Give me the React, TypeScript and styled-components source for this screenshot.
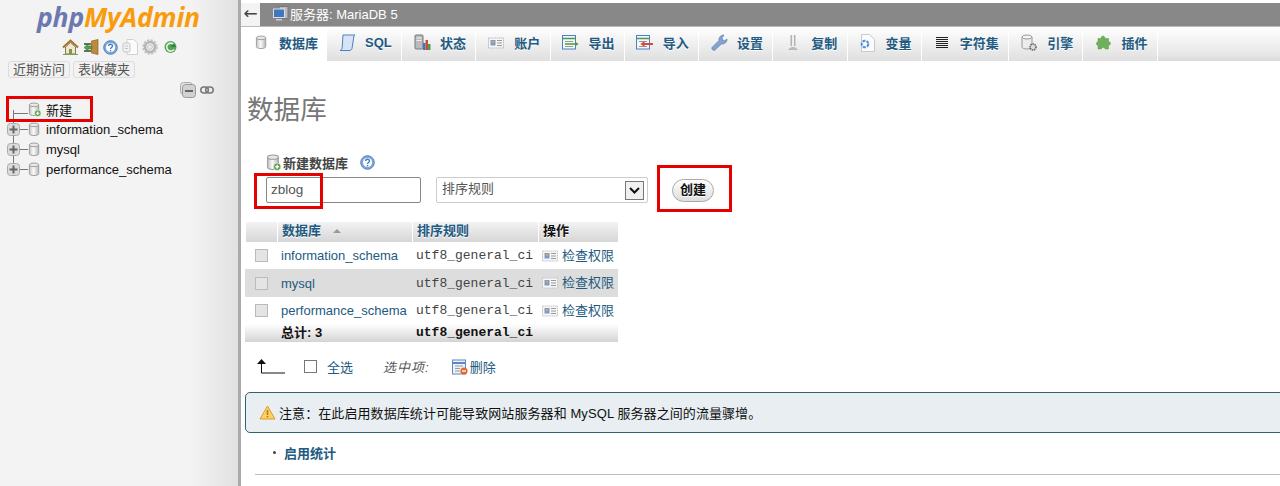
import styled, { createGlobalStyle } from "styled-components";

const GlobalStyle = createGlobalStyle`
  html, body {
    margin: 0;
    padding: 0;
    height: 100%;
    overflow: hidden;
    background: #fff;
  }
  body {
    font-family: "Liberation Sans", "Noto Sans CJK SC", sans-serif;
    font-size: 13px;
    color: #444;
  }
`;

/* ---------- icons ---------- */

const Db = ({ add = false, size = 14 }: { add?: boolean; size?: number }) => (
  <svg width={size} height={size + 2} viewBox="0 0 14 16">
    <defs>
      <linearGradient id="dbg" x1="0" x2="1" y1="0" y2="0">
        <stop offset="0" stopColor="#c4c4c4" />
        <stop offset="0.45" stopColor="#fafafa" />
        <stop offset="1" stopColor="#b8b8b8" />
      </linearGradient>
    </defs>
    <path d="M1.5 3v9.5c0 1.2 2.4 2 5 2s5-.8 5-2V3z" fill="url(#dbg)" stroke="#999" />
    <ellipse cx="6.5" cy="3" rx="5" ry="2" fill="#e8e8e8" stroke="#999" />
    {add && (
      <>
        <circle cx="10.5" cy="12" r="3.5" fill="#5a9e4b" stroke="#fff" strokeWidth="0.6" />
        <path d="M8.7 12h3.6M10.5 10.2v3.6" stroke="#fff" strokeWidth="1.2" />
      </>
    )}
  </svg>
);

const HomeIcon = () => (
  <svg width="17" height="16" viewBox="0 0 17 16">
    <path d="M1 8.5 8.5 1.5 16 8.5" fill="none" stroke="#a5742c" strokeWidth="2" />
    <path d="M3.5 8 8.5 3.5 13.5 8v7h-10z" fill="#efe6cf" stroke="#8b7a50" />
    <path d="M7 10h3v5H7z" fill="#7a9a4a" />
    <path d="M1 15.5h15" stroke="#7da04f" strokeWidth="1" />
  </svg>
);

const ExitIcon = () => (
  <svg width="16" height="16" viewBox="0 0 16 16">
    <path d="M8.5 2 15 .5v15l-6.5-1.5z" fill="#c08a3c" stroke="#8d6426" strokeWidth="0.7" />
    <path d="M1 4h7v2H1zM1 11h7v2H1z" fill="#6b6f5c" />
    <path d="M1 8.5 5 5v2h4v3H5v2z" fill="#54a050" stroke="#2f7232" strokeWidth="0.5" />
  </svg>
);

const HelpIcon = () => (
  <svg width="15" height="15" viewBox="0 0 15 15">
    <circle cx="7.5" cy="7.5" r="6.8" fill="#7ba6dc" stroke="#5a84bb" />
    <circle cx="7.5" cy="7.5" r="4.6" fill="#fff" />
    <path d="M5.6 6c.2-2.4 3.9-2.2 3.9 0 0 1.5-2 1.4-2 3" fill="none" stroke="#3e78bd" strokeWidth="1.4" />
    <path d="M6.8 10h1.4v1.4H6.8z" fill="#3e78bd" />
  </svg>
);

const DocIcon = () => (
  <svg width="16" height="16" viewBox="0 0 16 16">
    <path d="M5 .5h6.5L15.5 4v11.5H5z" fill="#fbfbfb" stroke="#d2d2d2" />
    <rect x="1" y="4" width="7" height="9" rx="1.5" fill="#f1f1f1" stroke="#c4c4c4" />
    <path d="M3 7h3M3 9.5h3" stroke="#c4c4c4" />
  </svg>
);

const GearIcon = () => (
  <svg width="16" height="16" viewBox="0 0 16 16">
    <circle cx="8" cy="8" r="5" fill="none" stroke="#b4b4b4" strokeWidth="2.6" />
    <circle cx="8" cy="8" r="6.8" fill="none" stroke="#c4c4c4" strokeWidth="2" strokeDasharray="2.2 1.4" />
    <circle cx="8" cy="8" r="2.4" fill="#ececec" stroke="#aaa" strokeWidth="0.6" />
  </svg>
);

const ReloadIcon = () => (
  <svg width="15" height="14" viewBox="-2 0 15 14">
    <circle cx="6.5" cy="7" r="6" fill="#55a35a" />
    <path d="M10 4.8A4 4 0 1 0 10 9.4" fill="none" stroke="#e4f2df" strokeWidth="1.6" />
    <path d="M6.8 6.8h5.4L9.5 3.6z" fill="#2e7f3a" />
  </svg>
);

const CollapseIcon = () => (
  <svg width="16" height="16" viewBox="0 0 16 16">
    <rect x="0.5" y="0.5" width="12" height="12" rx="3" fill="#e4e4e4" stroke="#aaa" />
    <rect x="2.5" y="2.5" width="13" height="13" rx="3" fill="#d2d2d2" stroke="#999" />
    <path d="M5 9h8" stroke="#666" strokeWidth="2" />
  </svg>
);

const LinkIcon = () => (
  <svg width="14" height="8" viewBox="0 0 14 8">
    <rect x="0.8" y="1" width="7.5" height="6" rx="3" fill="none" stroke="#777" strokeWidth="1.5" />
    <rect x="5.7" y="1" width="7.5" height="6" rx="3" fill="none" stroke="#777" strokeWidth="1.5" />
  </svg>
);

const PlusBox = () => (
  <svg width="13" height="13" viewBox="0 0 13 13">
    <rect x="0.5" y="0.5" width="12" height="12" rx="3" fill="#dcdcdc" stroke="#aaa" />
    <path d="M2.500 6.500h8M6.500 2.500v8" stroke="#666" strokeWidth="2" />
  </svg>
);

const ScrollIcon = () => (
  <svg width="17" height="17" viewBox="0 0 17 17">
    <path d="M4 1h12c-1.500 1-1.500 3-1.500 4l-1.500 9.500c-.3 1.500-1.500 2-3 2H1c1.500-.5 2-1.500 2.200-3z" fill="#d7e4f6" stroke="#4c80c4" />
  </svg>
);

const StatusIcon = () => (
  <svg width="17" height="17" viewBox="0 0 17 17">
    <rect x="1" y="1" width="8" height="14" rx="1" fill="#bbb" stroke="#777" />
    <path d="M2.500 4h5M2.500 6.500h5" stroke="#eee" />
    <path d="M9 9h2.500v7H9z" fill="#3a76c4" />
    <path d="M11.500 6H14v10h-2.500z" fill="#d04a3a" />
    <path d="M14 10h2.500v6H14z" fill="#4aa04a" />
  </svg>
);

const CardIcon = ({ dim = false }: { dim?: boolean }) => (
  <svg width="16" height="12" viewBox="0 0 16 12">
    <rect x="0.5" y="1" width="15" height="10" fill="#f6f6f6" stroke={dim ? "#c6c6c6" : "#bbb"} strokeDasharray="1.500 0.600" />
    <rect x="2.500" y="3" width="5" height="5.500" fill="#6f9ed6" />
    <rect x="3.800" y="3.800" width="2.400" height="2.400" fill="#e6a04a" />
    <path d="M9 3.500h5M9 6h5M9 8.500h5" stroke="#9a9a9a" />
  </svg>
);

const ExportIcon = () => (
  <svg width="17" height="15" viewBox="0 0 17 15">
    <rect x="0.5" y="0.5" width="13" height="13.500" fill="#f3f6fb" stroke="#4c80c4" />
    <path d="M0.500 3.500h13" stroke="#4c9a4c" strokeWidth="1.500" />
    <path d="M3 6.500h8M3 11.500h8" stroke="#999" />
    <path d="M3 9h10" stroke="#4a9a3e" strokeWidth="1.500" />
    <path d="M13 6.500 16.500 9 13 11.500z" fill="#4a9a3e" />
  </svg>
);

const ImportIcon = () => (
  <svg width="17" height="15" viewBox="0 0 17 15">
    <rect x="0.500" y="0.500" width="13" height="13.500" fill="#f3f6fb" stroke="#4c80c4" />
    <path d="M0.500 3.500h13" stroke="#4c9a4c" strokeWidth="1.500" />
    <path d="M3 6.500h8M3 11.500h8" stroke="#999" />
    <path d="M7 9h10" stroke="#e0453a" strokeWidth="2" />
    <path d="M8.500 6 4.500 9l4 3z" fill="#e0453a" />
  </svg>
);

const WrenchIcon = () => (
  <svg width="17" height="17" viewBox="0 0 17 17">
    <path d="M2 16c-1-.5-1.500-1.500-1-2.500l7-7C7.500 4 9.500.8 13 1l-2 3 .7 2 2 .7L16 5c.3 3.500-3 5.500-5.500 5L4 16c-.6.500-1.300.500-2 0z" fill="#7fa4d8" stroke="#6b7f99" strokeWidth="0.700" />
  </svg>
);

const ReplicationIcon = () => (
  <svg width="12" height="18" viewBox="0 0 12 18">
    <path d="M3.500 1h1.500v11H3.500zM7 1h1.500v11H7z" fill="#b4b4b4" />
    <path d="M5 1h2v11H5z" fill="#eee" />
    <path d="M1 16c1-1.500 2.500-3 5-3s4 1.500 5 3z" fill="#b9b9b9" />
  </svg>
);

const VariableIcon = () => (
  <svg width="15" height="18" viewBox="0 0 15 18">
    <path d="M1.500.5h8l5 5v12h-13z" fill="#fbfbfb" stroke="#c9c9c9" />
    <circle cx="5" cy="10" r="3.300" fill="none" stroke="#4f8fe0" strokeWidth="2" strokeDasharray="3 1.200" />
  </svg>
);

const CharsetIcon = () => (
  <svg width="12" height="12" viewBox="0 0 12 12">
    <path d="M0 .5h12M0 2.500h12M0 4.500h12M0 6.500h12M0 8.500h12M0 10.500h12" stroke="#222" />
  </svg>
);

const EngineIcon = () => (
  <svg width="17" height="18" viewBox="0 0 17 18">
    <path d="M1 3v10c0 1.200 2.400 2 5 2s5-.8 5-2V3z" fill="#ececec" stroke="#999" />
    <ellipse cx="6" cy="3" rx="5" ry="2" fill="#f5f5f5" stroke="#999" />
    <circle cx="12" cy="13" r="3" fill="#ddd" stroke="#666" strokeWidth="1.600" strokeDasharray="1.500 0.700" />
  </svg>
);

const PluginIcon = () => (
  <svg width="15" height="16" viewBox="0 0 15 16">
    <path d="M5 3.500c0-1 .5-2.500 2-2.500s2 1.500 2 2.500h3.500v3.300c1 0 2 .5 2 1.700s-1 1.700-2 1.700V14H9c0-1-.5-1.500-1.800-1.500S5.500 13 5.500 14H2v-3.500C1 10.500.5 9.500.5 8.500S1 6.800 2 6.800V3.500z" fill="#6fb05c" stroke="#5d9a4b" strokeWidth="0.500" />
  </svg>
);

const MonitorIcon = () => (
  <svg width="16" height="16" viewBox="0 0 16 16">
    <rect x="6" y="0.500" width="9" height="12" fill="#bbb" stroke="#777" />
    <rect x="0.500" y="3" width="11" height="8.500" fill="#3e78bd" stroke="#dde" />
    <path d="M3 13h6v1.500H3z" fill="#ccc" />
  </svg>
);

const DeleteRowIcon = () => (
  <svg width="16" height="18" viewBox="0 -2 16 18">
    <rect x="0.500" y="1" width="13" height="14" fill="#eef3fa" stroke="#5a8ac6" />
    <path d="M0.500 4h13" stroke="#5a8ac6" strokeWidth="2" />
    <path d="M3 7h8M3 9.500h5M3 12h5" stroke="#9a9a9a" />
    <circle cx="12" cy="12" r="3.600" fill="#e8662a" />
    <path d="M10 12h4" stroke="#fff" strokeWidth="1.400" />
  </svg>
);

const WarnIcon = () => (
  <svg width="17" height="15" viewBox="0 0 17 15">
    <path d="M8.500 1 16 14H1z" fill="#fbd266" stroke="#e19a2a" strokeLinejoin="round" />
    <path d="M8.500 5v5" stroke="#b87a1a" strokeWidth="1.600" />
    <path d="M7.700 11h1.600v1.400H7.700z" fill="#b87a1a" />
  </svg>
);

const ArrowUpIcon = () => (
  <svg width="28" height="15" viewBox="0 0 28 15">
    <path d="M4.500 3v11H28" fill="none" stroke="#111" />
    <path d="M0 5 4.500 0 9 5z" fill="#111" />
  </svg>
);

/* ---------- page shell ---------- */

const Page = styled.div`
  display: flex;
  width: 1280px;
  height: 486px;
  overflow: hidden;
  position: relative;
`;

const Sidebar = styled.aside`
  flex: none;
  box-sizing: border-box;
  width: 241px;
  height: 486px;
  padding-top: 4px;
  background: linear-gradient(to right, #f3f3f3 0, #f3f3f3 192px, #e2e2e2 236px);
  border-right: 3px solid #aaa;
`;

const Logo = styled.div`
  height: 27px;
  margin-left: 37px;
  font-family: "Open Sans", "Liberation Sans", sans-serif;
  font-size: 26.5px;
  line-height: 27px;
  font-weight: 700;
  font-style: italic;
  color: #f89c0e;
  letter-spacing: -0.2px;

  span {
    color: #6c78af;
  }
`;

const IconRow = styled.div`
  display: flex;
  align-items: center;
  margin: 8px 0 0 62px;
  gap: 4px;
  height: 16px;
`;

const RecentRow = styled.div`
  display: flex;
  gap: 3px;
  margin: 6px 0 0 8px;
`;

const SmallButton = styled.span`
  display: block;
  width: 62px;
  height: 17px;
  box-sizing: border-box;
  border: 1px solid #ddd;
  border-radius: 3px;
  background: #f2f2f2;
  font-size: 13px;
  line-height: 15px;
  text-align: center;
  color: #555;
`;

const TreeTools = styled.div`
  display: flex;
  align-items: center;
  gap: 4px;
  height: 16px;
  margin: 4px 0 0 180px;
`;

const Tree = styled.ul`
  list-style: none;
  margin: 1px 0 0;
  padding: 0;
`;

const TreeRow = styled.li<{ $trunk: "lower" | "full" | "upper" }>`
  position: relative;
  display: flex;
  align-items: center;
  height: 20px;
  padding-left: 7px;
  color: #111;
  font-size: 13px;

  &::before {
    content: "";
    position: absolute;
    left: 13px;
    width: 1px;
    background: #777;
    top: ${({ $trunk }) => ($trunk === "lower" ? "11px" : "0")};
    bottom: ${({ $trunk }) => ($trunk === "upper" ? "10px" : "0")};
  }
`;

const Expander = styled.span`
  position: relative;
  display: flex;
  flex: none;
`;

const Connector = styled.span<{ $long?: boolean }>`
  flex: none;
  margin: ${({ $long }) => ($long ? "8px 0 0 6px" : "0")};
  width: ${({ $long }) => ($long ? "15px" : "8px")};
  height: 1px;
  background: #777;
`;

const TreeLabel = styled.span`
  margin-left: 5px;
`;

const Main = styled.main`
  flex: 1;
  min-width: 0;
`;

const TopBar = styled.header`
  display: flex;
  align-items: center;
  box-sizing: border-box;
  height: 24px;
  margin-top: 3px;
  background: #888;
  border-bottom: 1px solid #bbb;
  color: #fff;
  font-size: 13px;
`;

const BackButton = styled.span`
  width: 19px;
  height: 23px;
  background: #f3f3f3;
  color: #444;
  font: 17px/20px "DejaVu Sans", sans-serif;
  text-align: center;
`;

const ServerName = styled.span`
  display: flex;
  align-items: center;
  gap: 1px;
  margin-left: 13px;
  padding-bottom: 2px;
`;

const Tabs = styled.nav`
  display: flex;
  height: 33px;
  background: linear-gradient(#fff, #e6e6e6 28px, #dcdcdc);
  border-bottom: 1px solid #ddd;
`;

const Tab = styled.a<{ $active?: boolean }>`
  display: flex;
  align-items: center;
  box-sizing: border-box;
  height: 34px;
  padding: 0 ${({ $active }) => ($active ? "8px" : "9.25px")} 3px 0;
  border-right: 1px solid #fff;
  background: ${({ $active }) => ($active ? "#fff" : "linear-gradient(#fff, #dfdfdf)")};
  color: #235a81;
  font-weight: 700;
  font-size: 13px;
  white-space: nowrap;
  text-shadow: 0 1px 0 #fff;
`;

const TabIcon = styled.span`
  display: flex;
  flex: none;
  justify-content: center;
  width: 18px;
  margin: 0 9px 0 11px;
`;

const Content = styled.div`
  padding-left: 4px;
`;

const Heading = styled.h2`
  margin: 34px 0 0 2px;
  height: 30px;
  font-size: 26.6px;
  line-height: 30px;
  font-weight: 400;
  color: #777;
`;

const CreateForm = styled.section`
  margin: 29px 0 0 21px;
`;

const CreateTitle = styled.div`
  display: flex;
  align-items: center;
  height: 17px;
  font-weight: 700;
  color: #444;

  svg:first-child {
    margin-right: 2px;
  }
`;

const CreateHelp = styled.span`
  display: flex;
  margin-left: 12px;
`;

const CreateFields = styled.div`
  display: flex;
  align-items: center;
  margin-top: 6px;
`;

const NameInput = styled.div`
  box-sizing: border-box;
  width: 155px;
  height: 26px;
  padding-left: 4px;
  border: 1px solid #888;
  border-radius: 2px;
  font-size: 13.500px;
  line-height: 24px;
  color: #555;
`;

const CollationSelect = styled.div`
  display: flex;
  align-items: center;
  justify-content: space-between;
  box-sizing: border-box;
  width: 212px;
  height: 26px;
  margin-left: 15px;
  padding: 0 3px 0 5px;
  border: 1px solid #ccc;
  border-radius: 2px;
  line-height: 22px;
  color: #555;
`;

const SelectText = styled.span`
  padding-bottom: 2px;
`;

const SelectArrow = styled.span`
  display: flex;
  align-items: center;
  justify-content: center;
  box-sizing: border-box;
  width: 19px;
  height: 19px;
  border: 1px solid #777;
  background: #f0f0f0;
`;

const CreateButton = styled.span`
  box-sizing: border-box;
  width: 42px;
  height: 23px;
  margin-left: 24px;
  border: 1px solid #aaa;
  border-radius: 12px;
  background: linear-gradient(#fff, #ddd);
  font-weight: 700;
  line-height: 19px;
  text-align: center;
  color: #111;
  text-shadow: 0 1px 0 #fff;
`;

const DbTable = styled.div`
  display: grid;
  grid-template-columns: 32px 135px 126px 80px;
  width: 373px;
  margin-top: 19px;
`;

const HeadCell = styled.div<{ $dark?: boolean }>`
  height: 20px;
  padding-left: 4px;
  box-sizing: border-box;
  border-left: 1px solid #fff;
  background: linear-gradient(#f3f3f3, #d6d6d6);
  color: ${({ $dark }) => ($dark ? "#111" : "#235a81")};
  font-weight: 700;
  line-height: 18px;
  text-shadow: 0 1px 0 #fff;
`;

const SortMark = styled.span`
  display: inline-block;
  width: 0;
  height: 0;
  margin: 0 0 2px 12px;
  border: 4px solid transparent;
  border-top: 0;
  border-bottom: 4px solid #999;
`;

const Row = styled.div<{ $height: number; $shaded?: boolean }>`
  display: contents;

  & > * {
    height: ${({ $height }) => $height}px;
    background: ${({ $shaded }) => ($shaded ? "#ddd" : "#fff")};
  }
`;

const Cell = styled.div`
  display: flex;
  align-items: center;
  padding-left: 4px;
  box-sizing: border-box;
  white-space: nowrap;
  color: #235a81;
  font-size: 13px;
`;

const CheckCell = styled(Cell)`
  padding-left: 10px;
`;

const CheckBox = styled.span<{ $plain?: boolean }>`
  display: block;
  box-sizing: border-box;
  flex: none;
  width: 13px;
  height: 13px;
  border: 1px solid ${({ $plain }) => ($plain ? "#777" : "#bbb")};
  background: ${({ $plain }) => ($plain ? "#fff" : "#e4e4e4")};
`;

const MonoCell = styled(Cell)`
  font-family: "Liberation Mono", monospace;
  color: #444;
`;

const ActionCell = styled(Cell)`
  gap: 4px;
  padding-left: 4px;
  color: #235a81;
`;

const ActionText = styled.span`
  margin-bottom: 3px;
`;

const FootCell = styled.div`
  box-sizing: border-box;
  padding-left: 4px;
  background: linear-gradient(#fff, #d4d4d4) !important;
  color: #111;
  font-weight: 700;
  line-height: 17px;
`;

const FootMono = styled(FootCell)`
  font-family: "Liberation Mono", monospace;
`;

const BulkBar = styled.div`
  display: flex;
  align-items: center;
  height: 16px;
  margin: 16px 0 0 12px;
`;

const BulkCheck = styled.span`
  margin-left: 19px;
`;

const BulkAll = styled.span`
  margin-left: 10px;
  color: #235a81;
`;

const BulkLabel = styled.em`
  margin-left: 30px;
  color: #555;
  letter-spacing: 1px;
`;

const BulkDelete = styled.span`
  display: flex;
  align-items: center;
  gap: 2px;
  margin-left: 22px;
  color: #235a81;
`;

const Notice = styled.div`
  display: flex;
  align-items: center;
  box-sizing: border-box;
  width: 1060px;
  height: 41px;
  margin-top: 18px;
  padding-left: 13px;
  border: 1px solid #316173;
  border-radius: 5px;
  background: #e8eef1;
  color: #111;
  gap: 3px;
  letter-spacing: 0.08px;
`;

const Doc = styled.ul`
  list-style: none;
  margin: 0 0 0 10px;
  padding: 0;
  border-bottom: 1px solid #bbb;
`;

const DocItem = styled.li`
  display: flex;
  align-items: center;
  box-sizing: border-box;
  height: 41px;
  padding: 0 0 3px 18px;
  color: #235a81;
  font-weight: 700;
  gap: 8px;

  &::before {
    content: "";
    width: 3px;
    height: 3px;
    border-radius: 50%;
    background: #444;
  }
`;

/* the red marks someone drew on top of the screenshot */
const RedMark = styled.div<{ $x: number; $y: number; $w: number; $h: number }>`
  position: absolute;
  left: ${({ $x }) => $x}px;
  top: ${({ $y }) => $y}px;
  width: ${({ $w }) => $w}px;
  height: ${({ $h }) => $h}px;
  box-sizing: border-box;
  border: 3px solid #e60000;
`;

const tabs = [
  { label: "数据库", icon: <Db size={13} />, active: true },
  { label: "SQL", icon: <ScrollIcon /> },
  { label: "状态", icon: <StatusIcon /> },
  { label: "账户", icon: <CardIcon /> },
  { label: "导出", icon: <ExportIcon /> },
  { label: "导入", icon: <ImportIcon /> },
  { label: "设置", icon: <WrenchIcon /> },
  { label: "复制", icon: <ReplicationIcon /> },
  { label: "变量", icon: <VariableIcon /> },
  { label: "字符集", icon: <CharsetIcon /> },
  { label: "引擎", icon: <EngineIcon /> },
  { label: "插件", icon: <PluginIcon /> },
];

const databases = ["information_schema", "mysql", "performance_schema"];

export default function App() {
  return (
    <Page>
      <GlobalStyle />
      <Sidebar>
        <Logo>
          <span>php</span>MyAdmin
        </Logo>
        <IconRow>
          <HomeIcon />
          <ExitIcon />
          <HelpIcon />
          <DocIcon />
          <GearIcon />
          <ReloadIcon />
        </IconRow>
        <RecentRow>
          <SmallButton>近期访问</SmallButton>
          <SmallButton>表收藏夹</SmallButton>
        </RecentRow>
        <TreeTools>
          <CollapseIcon />
          <LinkIcon />
        </TreeTools>
        <Tree>
          <TreeRow $trunk="lower">
            <Connector $long />
            <Db add size={13} />
            <TreeLabel>新建</TreeLabel>
          </TreeRow>
          {databases.map((name, i) => (
            <TreeRow key={name} $trunk={i === databases.length - 1 ? "upper" : "full"}>
              <Expander>
                <PlusBox />
              </Expander>
              <Connector />
              <Db size={13} />
              <TreeLabel>{name}</TreeLabel>
            </TreeRow>
          ))}
        </Tree>
      </Sidebar>

      <Main>
        <TopBar>
          <BackButton>←</BackButton>
          <ServerName>
            <MonitorIcon />
            服务器: MariaDB 5
          </ServerName>
        </TopBar>
        <Tabs>
          {tabs.map((tab) => (
            <Tab key={tab.label} $active={tab.active}>
              <TabIcon>{tab.icon}</TabIcon>
              {tab.label}
            </Tab>
          ))}
        </Tabs>

        <Content>
          <Heading>数据库</Heading>

          <CreateForm>
            <CreateTitle>
              <Db add size={15} />
              新建数据库
              <CreateHelp>
                <HelpIcon />
              </CreateHelp>
            </CreateTitle>
            <CreateFields>
              <NameInput>zblog</NameInput>
              <CollationSelect>
                <SelectText>排序规则</SelectText>
                <SelectArrow>
                  <svg width="11" height="7" viewBox="0 0 11 7">
                    <path d="M1 1l4.500 4.500L10 1" fill="none" stroke="#111" strokeWidth="2" />
                  </svg>
                </SelectArrow>
              </CollationSelect>
              <CreateButton>创建</CreateButton>
            </CreateFields>
          </CreateForm>

          <DbTable>
            <HeadCell />
            <HeadCell>
              数据库
              <SortMark />
            </HeadCell>
            <HeadCell>排序规则</HeadCell>
            <HeadCell $dark>操作</HeadCell>

            {databases.map((name, i) => (
              <Row key={name} $height={i === 1 ? 28 : 27} $shaded={i === 1}>
                <CheckCell>
                  <CheckBox />
                </CheckCell>
                <Cell>{name}</Cell>
                <MonoCell>utf8_general_ci</MonoCell>
                <ActionCell>
                  <CardIcon dim />
                  <ActionText>检查权限</ActionText>
                </ActionCell>
              </Row>
            ))}

            <Row $height={18}>
              <FootCell />
              <FootCell>总计: 3</FootCell>
              <FootMono>utf8_general_ci</FootMono>
              <FootCell />
            </Row>
          </DbTable>

          <BulkBar>
            <ArrowUpIcon />
            <BulkCheck>
              <CheckBox $plain />
            </BulkCheck>
            <BulkAll>全选</BulkAll>
            <BulkLabel>选中项:</BulkLabel>
            <BulkDelete>
              <DeleteRowIcon />
              删除
            </BulkDelete>
          </BulkBar>

          <Notice>
            <WarnIcon />
            注意：在此启用数据库统计可能导致网站服务器和 MySQL 服务器之间的流量骤增。
          </Notice>

          <Doc>
            <DocItem>启用统计</DocItem>
          </Doc>
        </Content>
      </Main>

      <RedMark $x={6} $y={96} $w={87} $h={26} />
      <RedMark $x={254} $y={173} $w={69} $h={36} />
      <RedMark $x={657} $y={165} $w={75} $h={47} />
    </Page>
  );
}
